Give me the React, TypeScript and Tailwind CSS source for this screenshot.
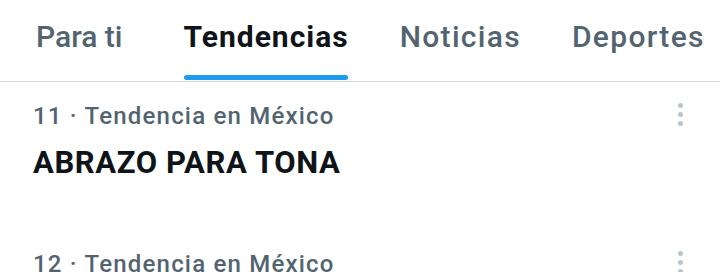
import React from "react";

const tabs = [
  { label: "Para ti", active: false, cls: "ml-[36px]", track: "tracking-[0px]" },
  { label: "Tendencias", active: true, cls: "ml-[61px]", track: "tracking-[1px]" },
  { label: "Noticias", active: false, cls: "ml-[51px]", track: "tracking-[1.3px]" },
  { label: "Deportes", active: false, cls: "ml-[51px]", track: "tracking-[1.3px]" },
];

const trends = [
  { rank: 11, place: "Tendencia en México", title: "ABRAZO PARA TONA" },
  { rank: 12, place: "Tendencia en México", title: "SEGUNDA TENDENCIA" },
];

function Dots() {
  return (
    <div className="flex flex-col items-center gap-[4px] pt-[2px]">
      <span className="w-[5px] h-[5px] rounded-full bg-[#b9c5cd]" />
      <span className="w-[5px] h-[5px] rounded-full bg-[#b9c5cd]" />
      <span className="w-[5px] h-[5px] rounded-full bg-[#b9c5cd]" />
    </div>
  );
}

export default function App() {
  return (
    <div
      className="w-[720px] h-[272px] overflow-hidden bg-white"
      style={{ fontFamily: "Roboto, 'Liberation Sans', sans-serif" }}
    >
      <div className="flex h-[82px] border-b border-[#cfd9de] whitespace-nowrap">
        {tabs.map((tab) => (
          <div key={tab.label} className={"relative flex items-start pt-[19px] " + tab.cls}>
            <span
              className={
                "text-[30px] leading-[36px] " +
                tab.track +
                " " +
                (tab.active ? "font-bold text-[#0f1419]" : "font-medium text-[#536471]")
              }
            >
              {tab.label}
            </span>
            {tab.active && (
              <div className="absolute left-0 right-[1px] bottom-[1px] h-[5px] rounded-full bg-[#1d9bf0]" />
            )}
          </div>
        ))}
      </div>

      {trends.map((t) => (
        <div key={t.rank} className="flex h-[148px] pl-[33px] pr-[37px] pt-[19px]">
          <div className="flex-1 whitespace-nowrap">
            <div className="text-[24px] leading-[30px] font-medium text-[#536471] tracking-[1.2px]">
              {t.rank} · {t.place}
            </div>
            <div className="mt-[14px] text-[31px] leading-[36px] font-bold text-[#0f1419] tracking-[0.6px]">
              {t.title}
            </div>
          </div>
          <Dots />
        </div>
      ))}
    </div>
  );
}
